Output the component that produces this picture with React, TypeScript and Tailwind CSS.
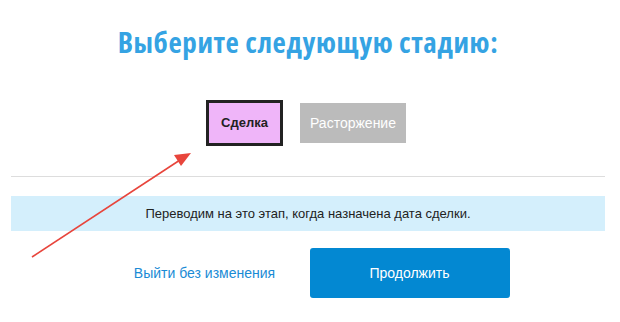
import React from "react";

export default function App() {
  return (
    <div className="relative w-[620px] h-[322px] bg-white overflow-hidden" style={{ fontFamily: '"Liberation Sans", Arial, sans-serif' }}>
      <div className="pl-[11px] pr-[15px] pt-[22px]">
        <h1
          className="text-center text-[29px] leading-[40px] tracking-[0.6px] font-bold text-[#35a3e3] font-stretch-condensed"
          style={{ fontFamily: '"Open Sans", sans-serif' }}
        >
          Выберите следующую стадию:
        </h1>
        <div className="flex justify-center items-center gap-[17px] mt-[38px] ml-[-4px]">
          <div className="w-[77px] h-[46px] border-[3px] border-[#222] bg-[#efb5f9] flex items-center justify-center text-[13px] font-bold text-[#222]">
            Сделка
          </div>
          <div className="w-[106px] h-[40px] bg-[#bbbbbb] flex items-center justify-center text-[14px] text-white">
            Расторжение
          </div>
        </div>
        <div className="mt-[30px] h-px bg-[#dddddd]" />
        <div className="mt-[19px] h-[35px] bg-[#d4effc] flex items-center justify-center text-[13px] text-[#222]">
          Переводим на это этап, когда назначена дата сделки.
        </div>
        <div className="mt-[17px] flex justify-center gap-[5px] ml-[-2px]">
          <div className="w-[200px] h-[50px] flex items-center justify-center text-[14px] text-[#1a8bd5]">
            Выйти без изменения
          </div>
          <div className="w-[200px] h-[50px] rounded-[3px] bg-[#0388d2] flex items-center justify-center text-[14px] text-white">
            Продолжить
          </div>
        </div>
      </div>
      <svg className="absolute left-0 top-0" width="620" height="322" viewBox="0 0 620 322">
        <line x1="32" y1="257" x2="180" y2="160" stroke="#e8453c" strokeWidth="1.6" />
        <polygon points="191,153 174,155 181,166" fill="#e8453c" />
      </svg>
    </div>
  );
}
